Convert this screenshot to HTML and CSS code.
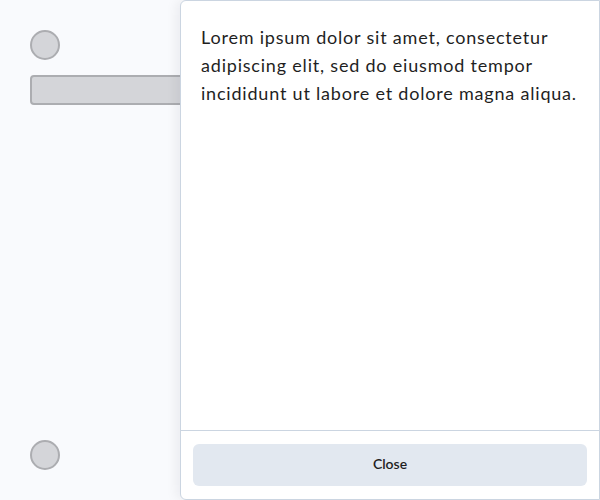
FILE: index.html
```html
<!DOCTYPE html>
<html>
<head>
<meta charset="utf-8">
<link rel="stylesheet" href="styles.css">
</head>
<body>
<div class="page">
  <div class="side">
    <div class="top">
      <div class="circle"></div>
      <div class="bar"></div>
    </div>
    <div class="circle"></div>
  </div>
  <div class="panel">
    <div class="content">
      <p class="text">Lorem ipsum dolor sit amet, consectetur adipiscing elit, sed do eiusmod tempor incididunt ut labore et dolore magna aliqua.</p>
    </div>
    <div class="footer">
      <button class="close">Close</button>
    </div>
  </div>
</div>
</body>
</html>
```
FILE: styles.css
```css
html, body {
  margin: 0;
  padding: 0;
  height: 100%;
}
body {
  background: #f9fafd;
  font-family: Lato, "Noto Sans", sans-serif;
  overflow: hidden;
}
.page {
  position: relative;
  height: 500px;
  width: 600px;
}
.side {
  padding: 30px;
  height: 500px;
  box-sizing: border-box;
  display: flex;
  flex-direction: column;
  justify-content: space-between;
}
.top {
  display: flex;
  flex-direction: column;
  gap: 15px;
}
.circle {
  width: 30px;
  height: 30px;
  box-sizing: border-box;
  border-radius: 50%;
  background: #d4d5d9;
  border: 2px solid #acadb1;
}
.bar {
  width: 200px;
  height: 30px;
  box-sizing: border-box;
  border-radius: 4px;
  background: #d4d5d9;
  border: 2px solid #acadb1;
}
.panel {
  position: absolute;
  left: 180px;
  top: 0;
  width: 420px;
  height: 500px;
  box-sizing: border-box;
  background: #fff;
  border: 1px solid #cbd5e1;
  border-radius: 6px 0 0 6px;
  box-shadow: -4px 0 12px rgba(15, 23, 42, 0.06);
  display: flex;
  flex-direction: column;
}
.content {
  flex: 1;
  padding: 22px 20px;
}
.text {
  margin: 0;
  font-size: 18px;
  line-height: 28px;
  letter-spacing: 0.8px;
  color: #1f1f1f;
}
.footer {
  border-top: 1px solid #cbd5e1;
  padding: 13px 12px;
}
.close {
  display: block;
  width: 100%;
  height: 42px;
  padding: 0 0 3px;
  border: none;
  border-radius: 6px;
  background: #e2e8f0;
  font-family: Lato, "Noto Sans", sans-serif;
  font-size: 14px;
  font-weight: 600;
  color: #1f1f1f;
}
```
